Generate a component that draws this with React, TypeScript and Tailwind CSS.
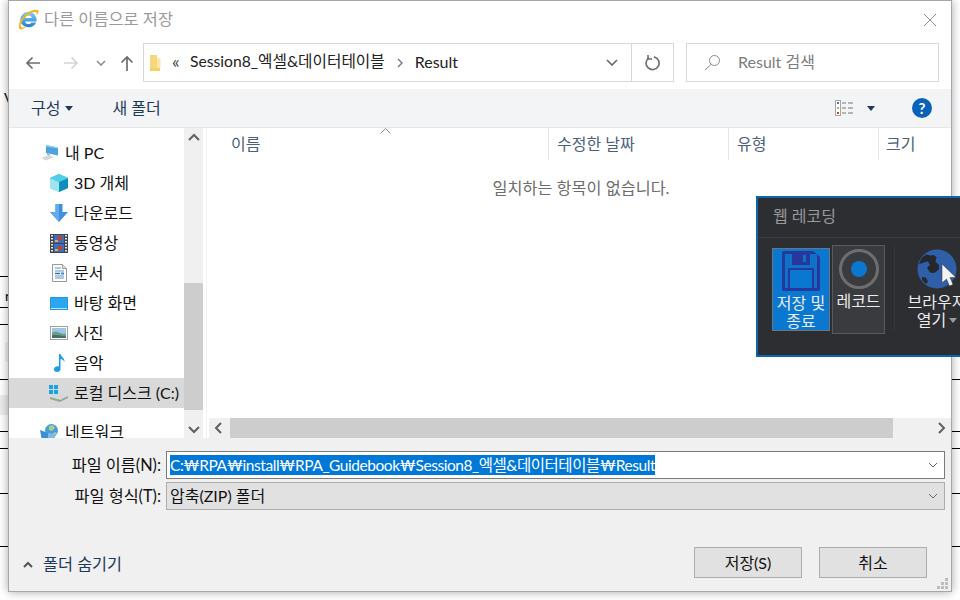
import React from "react";

const IE = () => (
  <svg width="21" height="21" viewBox="0 0 21 21" className="shrink-0">
    <defs>
      <linearGradient id="ieb" x1="0" y1="0" x2="0" y2="1">
        <stop offset="0" stopColor="#8ccdf4" />
        <stop offset="1" stopColor="#1c80d0" />
      </linearGradient>
    </defs>
    <path d="M2.300 11a8.200 8.200 0 0 1 16.200-1.800l.1 3.300H7.200c.3 3 4.600 3.500 6.300 1.100h4.700c-2 5-9 6-12.800 3-1.900-1.500-3.100-3.300-3.100-5.600zM7.200 9h6.600c-.4-3.300-6-3.300-6.600 0z" fill="url(#ieb)" fillRule="evenodd" />
    <path d="M1.300 19.800C-.8 15.800 4.400 6.800 10.700 3.100 15 .6 20 0 20.500 2c.3 1.200-.7 3-2 4.400.3-1.600.4-3-.9-3.300C14.500 2.400 7.300 7 4 12.800c-1.200 2.100-1.700 4-1 5.100.9 1.100 3.100.7 5.600-.3-2.800 2.400-6 3.700-7.300 2.200z" fill="#eeb422" />
  </svg>
);

const Folder = () => (
  <svg width="13" height="18" viewBox="0 0 13 18">
    <path d="M1 1h7v16H1z" fill="#f6d77e" />
    <path d="M8 4h3.500v10H8z" fill="#fbe7a6" />
    <path d="M1 14h10v3H1z" fill="#f3cf6e" />
  </svg>
);

const Chevron = ({ className = "", d = "M1 1l4 4 4-4", w = 10, h = 6, stroke = "#6b6b6b", sw = 1.6 }: { className?: string; d?: string; w?: number; h?: number; stroke?: string; sw?: number }) => (
  <svg width={w} height={h} viewBox={`0 0 ${w} ${h}`} className={className} fill="none">
    <path d={d} stroke={stroke} strokeWidth={sw} />
  </svg>
);

const Caret = ({ color = "#1e395b" }: { color?: string }) => (
  <svg width="8" height="5" viewBox="0 0 8 5"><path d="M0 0h8L4 5z" fill={color} /></svg>
);

const PCIcon = () => (
  <svg width="20" height="18" viewBox="0 0 20 18">
    <path d="M6 1l12 2.500v8L6 9z" fill="#4ba3e3" />
    <path d="M6 1l12 2.500v1L6 2.500z" fill="#9bd0f2" />
    <path d="M1 14l8-3 5 2-8 3.500z" fill="#d6d9dc" />
    <path d="M7 9l3 1.500v1L7 11z" fill="#a9afb5" />
  </svg>
);
const Cube = () => (
  <svg width="18" height="18" viewBox="0 0 18 18">
    <path d="M9 0l9 4v10l-9 4-9-4V4z" fill="#29b6d8" />
    <path d="M0 4l9 4v10l-9-4z" fill="#9fe4ef" />
    <path d="M9 8l9-4v10l-9 4z" fill="#0f8fbd" />
    <path d="M9 0l9 4-9 4-9-4z" fill="#51cfe6" />
  </svg>
);
const DownIcon = () => (
  <svg width="18" height="18" viewBox="0 0 18 18">
    <path d="M5.500 0h7v8H18l-9 10L0 8h5.500z" fill="#3f8fdf" />
    <path d="M5.500 0h3.500v18L0 8h5.500z" fill="#62abed" />
  </svg>
);
const Film = () => (
  <svg width="18" height="19" viewBox="0 0 18 19">
    <rect width="18" height="19" fill="#3d4650" />
    <rect x="4" y="1" width="10" height="8" fill="#3a6fc8" />
    <rect x="4" y="10" width="10" height="8" fill="#3a6fc8" />
    <circle cx="10" cy="4" r="2.500" fill="#b5482c" />
    <circle cx="10" cy="14" r="2.500" fill="#b5482c" />
    <rect x="5" y="6" width="3" height="2" fill="#d7b04a" />
    <rect x="5" y="15" width="3" height="2" fill="#d7b04a" />
    {[1, 4, 7, 10, 13, 16].map((y) => (
      <React.Fragment key={y}>
        <rect x="1" y={y} width="2" height="1.500" fill="#e6e6e6" />
        <rect x="15" y={y} width="2" height="1.500" fill="#e6e6e6" />
      </React.Fragment>
    ))}
  </svg>
);
const Doc = () => (
  <svg width="15" height="18" viewBox="0 0 15 18">
    <path d="M.5.500h10l4 4v13H.5z" fill="#fff" stroke="#9a9a9a" />
    <path d="M10.500.500v4h4" fill="#e3e3e3" stroke="#9a9a9a" />
    <path d="M3 4h6M3 7h9M3 12h9M3 14h9" stroke="#5a93c9" />
    <path d="M3 9.500h5" stroke="#2f6fb0" strokeWidth="1.500" />
    <rect x="9" y="8.500" width="3" height="2" fill="#3a8ad0" />
  </svg>
);
const Desk = () => (
  <svg width="18" height="13" viewBox="0 0 18 13">
    <rect width="18" height="13" rx="0.500" fill="#1e97e6" />
    <rect x="1" y="1" width="16" height="10" fill="#2aa7f0" />
    <path d="M1 11h16v1H1z" fill="#bfe3f8" />
  </svg>
);
const Pic = () => (
  <svg width="18" height="14" viewBox="0 0 18 14">
    <rect x="0.500" y="0.500" width="17" height="13" fill="#fff" stroke="#a0a0a0" />
    <rect x="2" y="2" width="14" height="10" fill="#9cc7e4" />
    <path d="M2 7c3-2 5-1 8 0s4 1 6 .5V12H2z" fill="#6e9a8c" />
    <path d="M2 9.500c4-1 8 0 14 1V12H2z" fill="#43705f" />
  </svg>
);
const Note = () => (
  <svg width="11" height="18" viewBox="0 0 11 18">
    <path d="M5 0h1.500c.5 3 4.500 4 4 8-.8-1.800-2.500-2.700-4-3v10c0 1.800-1.500 3-3.500 3S0 17 0 15.300s1.800-3 3.500-3c.6 0 1.100.1 1.500.3z" fill="#1b9ee8" />
  </svg>
);
const Drive = () => (
  <svg width="20" height="17" viewBox="0 0 20 17">
    <path d="M1 12l9-5 9 4-8 4z" fill="#d5d8da" />
    <path d="M1 12l10 3 8-4v2l-8 4-10-3z" fill="#9aa0a4" />
    <rect x="6" y="14" width="4" height="1.500" fill="#7cc855" />
    <path d="M0 0h4v4H0zM5 0h4v4H5zM0 5h4v4H0zM5 5h4v4H5z" fill="#19a2e8" />
  </svg>
);
const Net = () => (
  <svg width="20" height="17" viewBox="0 0 20 17">
    <circle cx="11.500" cy="6.500" r="6.500" fill="#4b9bd6" />
    <path d="M9 2l4-1 2 3-3 3-3-1zM13 9l3-1 1 2-3 2z" fill="#a8d08d" />
    <path d="M0 6l8 3v8H2z" fill="#3e8fd0" />
    <path d="M8 9l8 1-2 7H8z" fill="#7cbbe8" />
  </svg>
);

const Floppy = () => (
  <svg width="38" height="40" viewBox="0 0 38 40">
    <path d="M2 0h29l7 6v32a2 2 0 0 1-2 2H2a2 2 0 0 1-2-2V2a2 2 0 0 1 2-2z" fill="#26389c" />
    <rect x="3" y="3" width="32" height="34" fill="#0d72c8" />
    <rect x="10" y="3" width="18" height="11" fill="#26389c" />
    <rect x="21" y="4" width="3" height="7" fill="#0d72c8" />
    <rect x="6" y="17" width="26" height="20" fill="#26389c" />
    <rect x="8" y="19" width="22" height="18" fill="#0a78d0" />
  </svg>
);
const Rec = () => (
  <svg width="40" height="40" viewBox="0 0 40 40">
    <circle cx="20" cy="20" r="18.500" fill="none" stroke="#6e6e6e" strokeWidth="3" />
    <circle cx="20" cy="20" r="8" fill="#0a78d0" />
  </svg>
);
const GlobeCursor = () => (
  <svg width="40" height="40" viewBox="0 0 40 40" className="overflow-visible">
    <circle cx="20" cy="20" r="19.500" fill="#2f5fa8" />
    <path d="M2 15c3-.5 6-2.500 9-2.500l2 3.500-3 2.500 3 5 4 .5 5-3.500 0-4.500-3.500-3 1-5-3-2-3 .5-4.500-1-4.500 3.500z" fill="#26272c" />
    <path d="M5 28l4 .5 2 4-2 2.500-4-4z" fill="#26272c" />
    <path d="M25 15l0 19 4.500-4 3 7 3.500-1.500-3-7h6z" fill="#f4f4f4" stroke="#30323a" strokeWidth="0.500" />
  </svg>
);

const TreeRow = ({ icon, label, indent = true, selected = false, mt = false }: { icon: React.ReactNode; label: string; indent?: boolean; selected?: boolean; mt?: boolean }) => (
  <div className={`h-[30px] shrink-0 flex items-center text-[#111] ${selected ? "bg-[#d9d9d9]" : ""} ${mt ? "mt-[9px]" : ""} ${indent ? "pl-[40px]" : "pl-[31px]"}`}>
    <span className="w-[20px] flex justify-center shrink-0">{icon}</span>
    <span className="ml-[5px] whitespace-nowrap">{label}</span>
  </div>
);

const ScrollBtn = ({ d }: { d: string }) => (
  <div className="h-[19px] w-[19px] shrink-0 flex items-center justify-center">
    <svg width="12" height="12" viewBox="0 0 12 12" fill="none"><path d={d} stroke="#606060" strokeWidth="2" /></svg>
  </div>
);

const LINES = [276, 307, 324, 379, 431, 448, 493, 546];

export default function App() {
  return (
    <div className="relative w-[960px] h-[600px] overflow-hidden bg-white text-[16px] font-['Lato','Liberation_Sans','Noto_Sans_CJK_KR',sans-serif]">
      {LINES.map((y) => (
        <div key={y} className="absolute left-0 w-full h-px bg-black" style={{ top: y }} />
      ))}
      <div className="absolute left-[5px] top-[342px] w-[4px] h-[20px] bg-[#f0f0f0]" />
      <div className="absolute left-0 top-[395px] w-[9px] h-[20px] bg-[#ececec]" />
      <span className="absolute left-[4px] top-[87px] text-[14px] text-black">V</span>
      <span className="absolute left-[5px] top-[285px] text-[14px] text-black">r</span>

      <div className="absolute left-[8px] top-0 w-[944px] h-[592px] bg-white border border-[#a6a6a6] shadow-[0_0_9px_rgba(0,0,0,0.35)] flex flex-col">
        {/* title */}
        <div className="h-[37px] shrink-0 flex items-center pl-[9px] pr-[14px]">
          <IE />
          <span className="ml-[5px] text-[16.4px] text-[#9a9a9a]">다른 이름으로 저장</span>
          <svg width="14" height="14" viewBox="0 0 14 14" className="ml-auto" fill="none">
            <path d="M1 1l12 12M13 1L1 13" stroke="#8e8e8e" strokeWidth="1" />
          </svg>
        </div>

        {/* nav */}
        <div className="h-[51px] shrink-0 flex items-center pb-[2px] pl-[16px]">
          <svg width="16" height="14" viewBox="0 0 16 14" fill="none"><path d="M15 7H2M7.500 1.500L2 7l5.500 5.500" stroke="#6d6d6d" strokeWidth="1.700" /></svg>
          <svg width="16" height="14" viewBox="0 0 16 14" fill="none" className="ml-[22px]"><path d="M1 7h13M8.500 1.500L14 7l-5.500 5.500" stroke="#d4d4d4" strokeWidth="1.700" /></svg>
          <Chevron className="ml-[17px]" stroke="#8a8a8a" sw={1.500} />
          <svg width="14" height="16" viewBox="0 0 14 16" fill="none" className="ml-[14px]"><path d="M7 16V2M1.500 7.500L7 2l5.500 5.500" stroke="#6d6d6d" strokeWidth="1.700" /></svg>
          <div className="ml-[9px] w-[531px] h-[39px] border border-[#d9d9d9] flex items-center">
            <span className="ml-[5px]"><Folder /></span>
            <span className="ml-[10px] w-[9px] text-[18px] text-[#444] leading-none -mt-[4px]">«</span>
            <span className="ml-[9px] -mt-[2px] text-[15.7px] text-[#222] whitespace-nowrap">Session8_엑셀&amp;데이터테이블</span>
            <svg width="7" height="10" viewBox="0 0 7 10" fill="none" className="ml-[12px]"><path d="M1 1l4 4-4 4" stroke="#777" strokeWidth="1.400" /></svg>
            <span className="ml-[11px] -mt-[2px] text-[#222]">Result</span>
            <span className="ml-auto flex items-center h-full">
              <Chevron w={12} h={7} d="M1 1l5 5 5-5" stroke="#6b6b6b" sw={1.700} className="mr-[13px]" />
              <span className="w-[42px] h-full border-l border-[#d9d9d9] flex items-center justify-center">
                <svg width="16" height="16" viewBox="0 0 16 16" fill="none">
                  <path d="M4 2.700a6.500 6.500 0 1 0 5-.9" stroke="#707070" strokeWidth="1.700" />
                  <path d="M3 0v4h4" stroke="#707070" strokeWidth="1.500" />
                </svg>
              </span>
            </span>
          </div>
          <div className="ml-[12px] w-[253px] h-[39px] border border-[#d9d9d9] flex items-center pl-[17px]">
            <svg width="17" height="17" viewBox="0 0 17 17" fill="none"><circle cx="10.500" cy="6.500" r="5" stroke="#8a8a8a" /><path d="M7 10.500L1 16" stroke="#8a8a8a" /></svg>
            <span className="ml-[17px] -mt-[2px] text-[#7c7c7c]">Result 검색</span>
          </div>
        </div>

        {/* toolbar */}
        <div className="h-[39px] shrink-0 bg-[#f3f4f6] border-b border-[#e5e5e5] flex items-center pl-[22px] pr-[19px] text-[#1e395b]">
          <span>구성</span>
          <span className="ml-[5px]"><Caret /></span>
          <span className="ml-[39px]">새 폴더</span>
          <svg width="18" height="16" viewBox="0 0 18 16" className="ml-auto" fill="none">
            <rect x="0.500" y="0.500" width="5" height="15" fill="#fff" stroke="#a5a5a5" />
            <rect x="2" y="2" width="2" height="2" fill="#3a7cc0" />
            <rect x="2" y="7" width="2" height="2" fill="#c7a83c" />
            <rect x="2" y="12" width="2" height="2" fill="#c0452c" />
            <path d="M7 3h4M13 3h5M7 8h4M13 8h5M7 13h4M13 13h5" stroke="#777" />
          </svg>
          <span className="ml-[14px]"><Caret /></span>
          <span className="ml-[37px] w-[20px] h-[20px] rounded-full bg-[#0a62b8] text-white text-[15px] font-bold flex items-center justify-center leading-none">?</span>
        </div>

        {/* main */}
        <div className="h-[310px] shrink-0 flex">
          <div className="w-[175px] shrink-0 pt-[10px] flex flex-col overflow-hidden">
            <TreeRow indent={false} icon={<PCIcon />} label="내 PC" />
            <TreeRow icon={<Cube />} label="3D 개체" />
            <TreeRow icon={<DownIcon />} label="다운로드" />
            <TreeRow icon={<Film />} label="동영상" />
            <TreeRow icon={<Doc />} label="문서" />
            <TreeRow icon={<Desk />} label="바탕 화면" />
            <TreeRow icon={<Pic />} label="사진" />
            <TreeRow icon={<Note />} label="음악" />
            <TreeRow selected icon={<Drive />} label="로컬 디스크 (C:)" />
            <TreeRow mt indent={false} icon={<Net />} label="네트워크" />
          </div>
          <div className="w-[19px] shrink-0 bg-[#f0f0f0] flex flex-col">
            <ScrollBtn d="M1 8l5-5 5 5" />
            <div className="flex-1 pt-[136px] pb-[9px] flex">
              <div className="w-full bg-[#cdcdcd]" />
            </div>
            <ScrollBtn d="M1 4l5 5 5-5" />
          </div>
          <div className="w-[3px] shrink-0" />
          <div className="flex-1 min-w-0 border-l border-[#f2f2f2] flex flex-col relative">
            <svg width="11" height="6" viewBox="0 0 11 6" fill="none" className="absolute left-[173px] top-0"><path d="M.5 5.500l5-5 5 5" stroke="#8c8c8c" /></svg>
            <div className="h-[32px] shrink-0 flex text-[#4c607a]">
              <div className="w-[342px] pl-[24px] flex items-center border-r border-[#e5e5e5]">이름</div>
              <div className="w-[180px] pl-[8px] flex items-center border-r border-[#e5e5e5]">수정한 날짜</div>
              <div className="w-[150px] pl-[8px] flex items-center border-r border-[#e5e5e5]">유형</div>
              <div className="flex-1 pl-[7px] flex items-center">크기</div>
            </div>
            <div className="flex-1 text-center text-[16.3px] text-[#6d6d6d] pt-[16px] pl-[4px]">일치하는 항목이 없습니다.</div>
            <div className="h-[20px] shrink-0 ml-[2px] bg-[#f0f0f0] flex items-center">
              <ScrollBtn d="M8 1L3 6l5 5" />
              <div className="w-[663px] h-full ml-[2px] bg-[#cdcdcd]" />
              <div className="ml-auto mr-[1px]"><ScrollBtn d="M4 1l5 5-5 5" /></div>
            </div>
          </div>
        </div>

        {/* bottom */}
        <div className="flex-1 min-h-0 bg-[#f0f0f0] flex flex-col text-[#111]">
          <div className="flex items-center mt-[13px] h-[28px]">
            <span className="w-[152px] text-right text-[16.3px]">파일 이름(N):</span>
            <div className="ml-[5px] w-[779px] h-[28px] bg-white border border-[#7a7a7a] flex items-center pl-[3px]">
              <span className="bg-[#0078d7] text-white text-[15.5px] tracking-[-0.45px] h-[20px] leading-[20px] whitespace-nowrap">C:₩RPA₩install₩RPA_Guidebook₩Session8_엑셀&amp;데이터테이블₩Result</span>
              <Chevron className="ml-auto mr-[6px]" w={10} h={6} stroke="#666" sw={1} />
            </div>
          </div>
          <div className="flex items-center mt-[3px] h-[28px]">
            <span className="w-[152px] text-right text-[16.3px]">파일 형식(T):</span>
            <div className="ml-[5px] w-[779px] h-[28px] bg-[#e1e1e1] border border-[#adadad] flex items-center pl-[3px]">
              <span>압축(ZIP) 폴더</span>
              <Chevron className="ml-auto mr-[6px]" w={10} h={6} stroke="#666" sw={1} />
            </div>
          </div>
          <div className="flex-1 flex items-end pb-[13px] pl-[14px] pr-[24px] relative">
            <div className="flex items-center h-[31px] pt-[3px]">
              <Chevron w={10} h={7} d="M1 6l4-4 4 4" stroke="#555" sw={2} />
              <span className="ml-[10px] text-[16.3px] text-[#1e395b]">폴더 숨기기</span>
            </div>
            <div className="ml-auto w-[108px] h-[31px] bg-[#e1e1e1] border border-[#adadad] flex items-center justify-center">저장(S)</div>
            <div className="ml-[17px] w-[108px] h-[31px] bg-[#e1e1e1] border border-[#adadad] flex items-center justify-center">취소</div>
            <svg width="11" height="11" viewBox="0 0 11 11" className="absolute right-[3px] bottom-[2px]">
              <path d="M8 0h3v3H8zM4 4h3v3H4zM8 4h3v3H8zM0 8h3v3H0zM4 8h3v3H4zM8 8h3v3H8z" fill="#bdbdbd" />
            </svg>
          </div>
        </div>
      </div>

      {/* recording panel */}
      <div className="absolute left-[756px] top-[196px] w-[204px] h-[161px] overflow-hidden bg-[#2d2e32] border-2 border-r-0 border-[#0a66b5] flex flex-col">
        <div className="h-[40px] shrink-0 border-b border-[#3b3c40] flex items-center pl-[15px] pb-[3px] text-[#9a9a9a]">웹 레코딩</div>
        <div className="flex-1 flex items-start pl-[14px] leading-[18px] text-[#ececec]">
          <div className="mt-[10px] w-[58px] h-[83px] shrink-0 bg-[#0a78d0] border border-[#6c7480] flex flex-col items-center text-center pt-[2px]">
            <Floppy />
            <span className="mt-[3px] whitespace-nowrap">저장 및</span>
            <span>종료</span>
          </div>
          <div className="mt-[7px] ml-[2px] w-[53px] h-[89px] shrink-0 bg-[#3a3b3e] border border-[#5a5a5e] flex flex-col items-center pt-[3px]">
            <Rec />
            <span className="mt-[3px] whitespace-nowrap">레코드</span>
          </div>
          <div className="mt-[8px] ml-[9px] w-px h-[85px] shrink-0 bg-[#36373b]" />
          <div className="mt-[11px] ml-[11px] w-[62px] shrink-0 flex flex-col items-center">
            <GlobeCursor />
            <span className="mt-[4px] whitespace-nowrap">브라우저</span>
            <span className="flex items-center gap-[3px]">열기<Caret color="#9a9a9a" /></span>
          </div>
        </div>
      </div>
    </div>
  );
}
